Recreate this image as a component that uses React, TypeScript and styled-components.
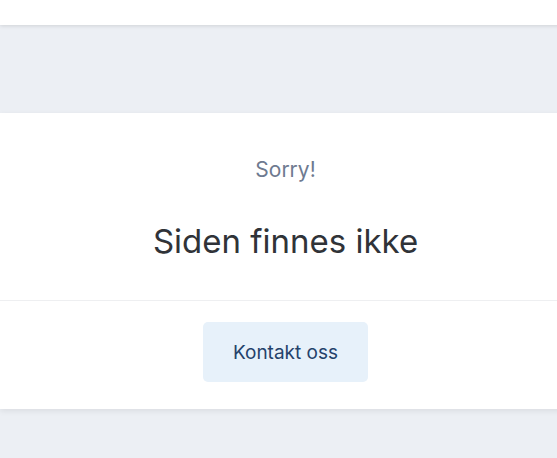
import React from "react";
import styled, { createGlobalStyle } from "styled-components";

const Global = createGlobalStyle`
  html, body { margin: 0; padding: 0; background: #eceff4; overflow: hidden; }
  body { font-family: Inter, "Noto Sans", sans-serif; }
`;

const Header = styled.header`
  width: 571px;
  height: 25px;
  background: #ffffff;
  box-shadow: 0 1px 4px rgba(0, 0, 0, 0.12);
  position: relative;
  z-index: 1;
`;

const Main = styled.main`
  width: 571px;
  padding-top: 88px;
  min-height: 433px;
  box-sizing: border-box;
`;

const Card = styled.section`
  background: #ffffff;
  box-shadow: 0 2px 6px rgba(0, 0, 0, 0.08);
`;

const Top = styled.div`
  height: 188px;
  display: flex;
  flex-direction: column;
  align-items: center;
  padding-top: 42px;
  box-sizing: border-box;
  border-bottom: 1px solid #eeeff1;
`;

const Eyebrow = styled.p`
  margin: 0;
  font-size: 21px;
  line-height: 30px;
  color: #6e7a90;
`;

const Title = styled.h1`
  margin: 34px 0 0;
  font-size: 33px;
  font-weight: 400;
  line-height: 44px;
  color: #303338;
`;

const Bottom = styled.div`
  display: flex;
  justify-content: center;
  padding: 21px 0 27px;
`;

const Button = styled.button`
  height: 60px;
  width: 165px;
  border: none;
  border-radius: 5px;
  background: #e7f1fa;
  color: #24426a;
  font-family: Inter, "Noto Sans", sans-serif;
  font-size: 19px;
  cursor: pointer;
`;

export default function App() {
  return (
    <>
      <Global />
      <Header />
      <Main>
        <Card>
          <Top>
            <Eyebrow>Sorry!</Eyebrow>
            <Title>Siden finnes ikke</Title>
          </Top>
          <Bottom>
            <Button>Kontakt oss</Button>
          </Bottom>
        </Card>
      </Main>
    </>
  );
}
